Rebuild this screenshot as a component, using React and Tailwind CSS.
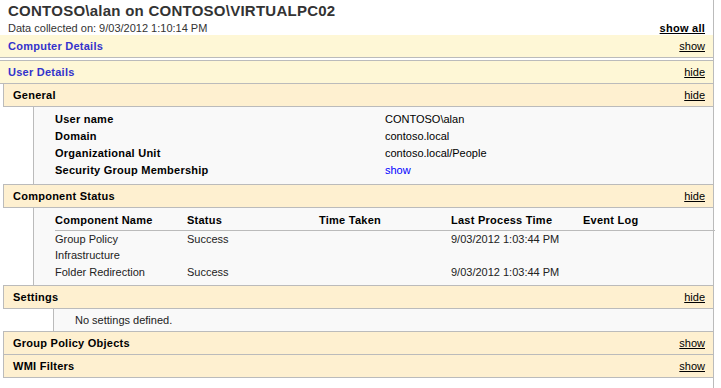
import React from 'react';

function Bar({ title, action, top, tone = 'sub', className = '' }) {
    const base = tone === 'main'
        ? 'bg-[#FEF7D6] text-[#3333CC]'
        : 'bg-[#FEF0D0] text-black ml-[3px] border-l';
    return (
        <div className={`flex items-center justify-between h-[23px] border-b border-[#BBBBBB] pl-[8px] pr-[8px] ${base} ${top ? 'border-t h-[24px]' : ''} ${className}`}>
            <span className={`font-bold tracking-[0.25px] ${tone === 'main' ? 'pl-0' : 'pl-[1px]'}`}>{title}</span>
            <a href="#" className="text-black underline font-normal">{action}</a>
        </div>
    );
}

function Details({ indent, children, className = '' }) {
    return (
        <div className={`bg-[#F9F9F9] border-l border-[#BBBBBB] ${indent} ${className}`}>
            {children}
        </div>
    );
}

const general = [
    ['User name', 'CONTOSO\\alan'],
    ['Domain', 'contoso.local'],
    ['Organizational Unit', 'contoso.local/People'],
    ['Security Group Membership', 'show'],
];

const components = [
    ['Group Policy', 'Success', '', '9/03/2012 1:03:44 PM', ''],
    ['Infrastructure', '', '', '', ''],
    ['Folder Redirection', 'Success', '', '9/03/2012 1:03:44 PM', ''],
];

export default function App() {
    return (
        <div className="w-[714px] min-h-[388px] bg-white border-r border-[#BBBBBB] text-[11px] text-[#222] font-['Liberation_Sans',Arial,sans-serif]">
            <div className="pl-[8px] pr-[8px]">
                <h1 className="text-[15px] font-bold leading-[18px] pt-[2px] text-[#333] tracking-[0.25px]">CONTOSO\alan on CONTOSO\VIRTUALPC02</h1>
                <div className="flex items-end justify-between h-[15px] leading-[13px]">
                    <span className="text-[#333]">Data collected on: 9/03/2012 1:10:14 PM</span>
                    <a href="#" className="font-bold underline text-black tracking-[0.25px]">show all</a>
                </div>
            </div>

            <Bar title="Computer Details" action="show" tone="main" />
            <div className="h-[2px]" />
            <Bar title="User Details" action="hide" tone="main" top />

            <Bar title="General" action="hide" />
            <Details indent="ml-[33px]" className="pt-[4px] pb-[5px]">
                <table className="ml-[21px] border-collapse">
                    <tbody>
                        {general.map(([k, v]) => (
                            <tr key={k} className="h-[17px]">
                                <td className="w-[330px] font-bold text-black p-0 tracking-[0.25px]">{k}</td>
                                <td className={`p-0 ${v === 'show' ? 'text-[#0000FF]' : 'text-black'}`}>{v}</td>
                            </tr>
                        ))}
                    </tbody>
                </table>
            </Details>

            <Bar title="Component Status" action="hide" top />
            <Details indent="ml-[33px]" className="pt-[3px] pb-[4px]">
                <table className="ml-[21px] w-[658px] border-collapse table-fixed">
                    <thead>
                        <tr className="h-[19px] border-b border-[#BBBBBB]">
                            {['Component Name', 'Status', 'Time Taken', 'Last Process Time', 'Event Log'].map(h => (
                                <th key={h} className="text-left font-bold text-black p-0 w-[132px] tracking-[0.25px]">{h}</th>
                            ))}
                        </tr>
                    </thead>
                    <tbody>
                        {components.map((row, i) => (
                            <tr key={i} className="h-[17px]">
                                {row.map((c, j) => (
                                    <td key={j} className="p-0 text-[#222]">{c}</td>
                                ))}
                            </tr>
                        ))}
                    </tbody>
                </table>
            </Details>

            <Bar title="Settings" action="hide" top />
            <Details indent="ml-[53px]" className="h-[22px] flex items-center pl-[21px]">
                <span className="text-[#222]">No settings defined.</span>
            </Details>

            <Bar title="Group Policy Objects" action="show" top />
            <Bar title="WMI Filters" action="show" />
        </div>
    );
}
